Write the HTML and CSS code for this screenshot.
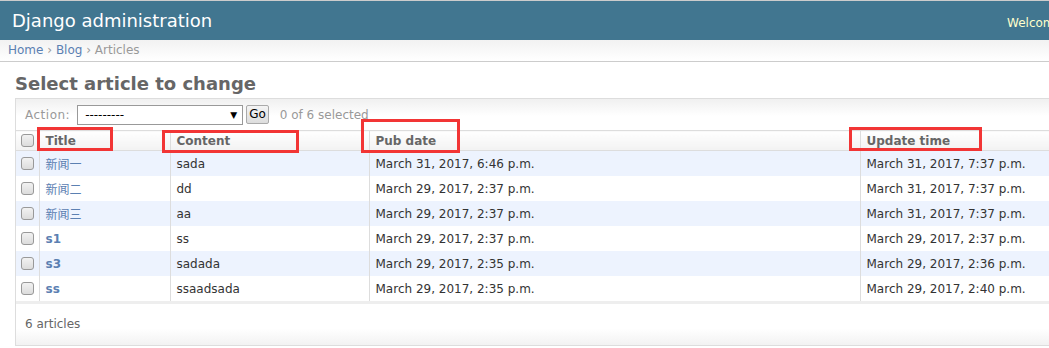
FILE: index.html
```html
<!DOCTYPE html>
<html lang="en">
<head>
    <meta charset="UTF-8">
    <title>Select article to change | Django site admin</title>
    <link rel="stylesheet" href="styles.css">
</head>
<body>
<div class="page">
    <div id="header">
        <div id="branding">Django administration</div>
        <div id="user-tools">Welcome, <strong>admin</strong>. View site / Change password / Log out</div>
    </div>

    <div class="breadcrumbs">
        <a href="#">Home</a> &rsaquo; <a href="#">Blog</a> &rsaquo; Articles
    </div>

    <div id="content">
        <h1>Select article to change</h1>

        <div id="changelist">
            <div class="actions">
                <label>Action: </label>
                <span class="select">---------<span class="arrow">&#9660;</span></span>
                <span class="button">Go</span>
                <span class="counter">0 of 6 selected</span>
            </div>

            <table id="result_list">
                <colgroup>
                    <col class="c-check">
                    <col class="c-title">
                    <col class="c-content">
                    <col class="c-pub">
                    <col class="c-upd">
                </colgroup>
                <thead>
                    <tr>
                        <th class="action-checkbox"><span class="box"></span></th>
                        <th>Title</th>
                        <th>Content</th>
                        <th>Pub date</th>
                        <th>Update time</th>
                    </tr>
                </thead>
                <tbody>
                    <tr class="row1">
                        <td class="action-checkbox"><span class="box"></span></td>
                        <th><a href="#" class="cjk">新闻一</a></th>
                        <td>sada</td>
                        <td>March 31, 2017, 6:46 p.m.</td>
                        <td>March 31, 2017, 7:37 p.m.</td>
                    </tr>
                    <tr class="row2">
                        <td class="action-checkbox"><span class="box"></span></td>
                        <th><a href="#" class="cjk">新闻二</a></th>
                        <td>dd</td>
                        <td>March 29, 2017, 2:37 p.m.</td>
                        <td>March 31, 2017, 7:37 p.m.</td>
                    </tr>
                    <tr class="row1">
                        <td class="action-checkbox"><span class="box"></span></td>
                        <th><a href="#" class="cjk">新闻三</a></th>
                        <td>aa</td>
                        <td>March 29, 2017, 2:37 p.m.</td>
                        <td>March 31, 2017, 7:37 p.m.</td>
                    </tr>
                    <tr class="row2">
                        <td class="action-checkbox"><span class="box"></span></td>
                        <th><a href="#">s1</a></th>
                        <td>ss</td>
                        <td>March 29, 2017, 2:37 p.m.</td>
                        <td>March 29, 2017, 2:37 p.m.</td>
                    </tr>
                    <tr class="row1">
                        <td class="action-checkbox"><span class="box"></span></td>
                        <th><a href="#">s3</a></th>
                        <td>sadada</td>
                        <td>March 29, 2017, 2:35 p.m.</td>
                        <td>March 29, 2017, 2:36 p.m.</td>
                    </tr>
                    <tr class="row2">
                        <td class="action-checkbox"><span class="box"></span></td>
                        <th><a href="#">ss</a></th>
                        <td>ssaadsada</td>
                        <td>March 29, 2017, 2:35 p.m.</td>
                        <td>March 29, 2017, 2:40 p.m.</td>
                    </tr>
                </tbody>
            </table>

            <p class="paginator">6 articles</p>
        </div>
    </div>

    <!-- annotation boxes drawn over the screenshot -->
    <div class="mark mark-title"></div>
    <div class="mark mark-content"></div>
    <div class="mark mark-pub"></div>
    <div class="mark mark-upd"></div>
</div>
</body>
</html>
```

FILE: styles.css
```css
html {
    overflow: hidden;
}

body {
    margin: 0;
    font-family: "DejaVu Sans", Verdana, sans-serif;
    font-size: 12px;
    color: #333;
    background: #fff;
}

a {
    color: #5b80b2;
    text-decoration: none;
}

.page {
    position: relative;
    width: 1400px;
}

#header {
    display: flex;
    align-items: center;
    height: 39px;
    border-top: 1px solid #ccc;
    background: #417690;
    color: #ffc;
}

#branding {
    width: 995px;
    padding-left: 12px;
    font-size: 18px;
    color: #fff;
}

#user-tools {
    font-size: 12px;
    padding-top: 4px;
}

#user-tools strong {
    font-weight: normal;
}

.breadcrumbs {
    height: 21px;
    line-height: 20px;
    padding-left: 8px;
    background: linear-gradient(#f2f2f2, #fff);
    border-bottom: 1px solid #ccc;
    color: #999;
    font-size: 12px;
}

.breadcrumbs a {
    color: #5b80b2;
}

#content {
    padding: 11px 15px 0;
}

h1 {
    margin: 0 0 3px;
    font-size: 18px;
    line-height: 22px;
    color: #666;
}

#changelist {
    width: 1200px;
    border: 1px solid #ddd;
}

.actions {
    display: flex;
    align-items: center;
    height: 31px;
    padding-left: 9px;
    background: linear-gradient(#f0f0f0, #fff 55%);
    color: #999;
    font-size: 12px;
}

.actions label {
    letter-spacing: 0.5px;
    margin-right: 7px;
}

.select {
    display: flex;
    justify-content: space-between;
    align-items: center;
    box-sizing: border-box;
    width: 166px;
    height: 20px;
    padding: 0 5px 0 7px;
    border: 1px solid #999;
    background: #fff;
    color: #000;
}

.arrow {
    font-size: 9px;
}

.button {
    box-sizing: border-box;
    height: 19px;
    line-height: 17px;
    margin-left: 3px;
    padding: 0 2px;
    border: 1px solid #aaa;
    border-radius: 2px;
    background: linear-gradient(#f4f4f4, #ddd);
    color: #000;
}

.counter {
    margin-left: 11px;
}

#result_list {
    table-layout: fixed;
    border-collapse: collapse;
    width: 1184px;
}

.c-check { width: 23px; }
.c-title { width: 131px; }
.c-content { width: 199px; }
.c-pub { width: 491px; }
.c-upd { width: 340px; }

#result_list th,
#result_list td {
    height: 25px;
    padding: 0 6px;
    text-align: left;
    border-left: 1px solid #ddd;
    white-space: nowrap;
    overflow: hidden;
}

#result_list thead th {
    height: 19px;
    border-top: 1px solid #ddd;
    border-bottom: 1px solid #ddd;
    background: linear-gradient(#fff, #f2f2f2);
    color: #666;
    font-weight: bold;
}

#result_list tr > :first-child {
    border-left: none;
    padding: 0 0 0 5px;
}

#result_list tbody th a {
    font-weight: bold;
}

#result_list tbody th a.cjk {
    font-family: "Noto Sans CJK SC", sans-serif;
    font-weight: normal;
}

.row1 {
    background: #edf3fe;
}

.row2 {
    background: #fff;
}

.box {
    display: block;
    box-sizing: border-box;
    width: 13px;
    height: 13px;
    border: 1px solid #999;
    border-radius: 3px;
    background: linear-gradient(#f2f2f2, #dcdcdc);
}

.paginator {
    margin: 0;
    height: 41px;
    line-height: 40px;
    padding-left: 9px;
    border-top: 3px solid #eee;
    background: linear-gradient(#fff 60%, #f2f2f2);
    color: #666;
}

.mark {
    position: absolute;
    border: 3px solid #f23535;
    box-sizing: border-box;
}

.mark-title { left: 37px; top: 127px; width: 76px; height: 24px; }
.mark-content { left: 162px; top: 130px; width: 137px; height: 23px; }
.mark-pub { left: 361px; top: 119px; width: 99px; height: 34px; }
.mark-upd { left: 849px; top: 127px; width: 133px; height: 24px; }
```
